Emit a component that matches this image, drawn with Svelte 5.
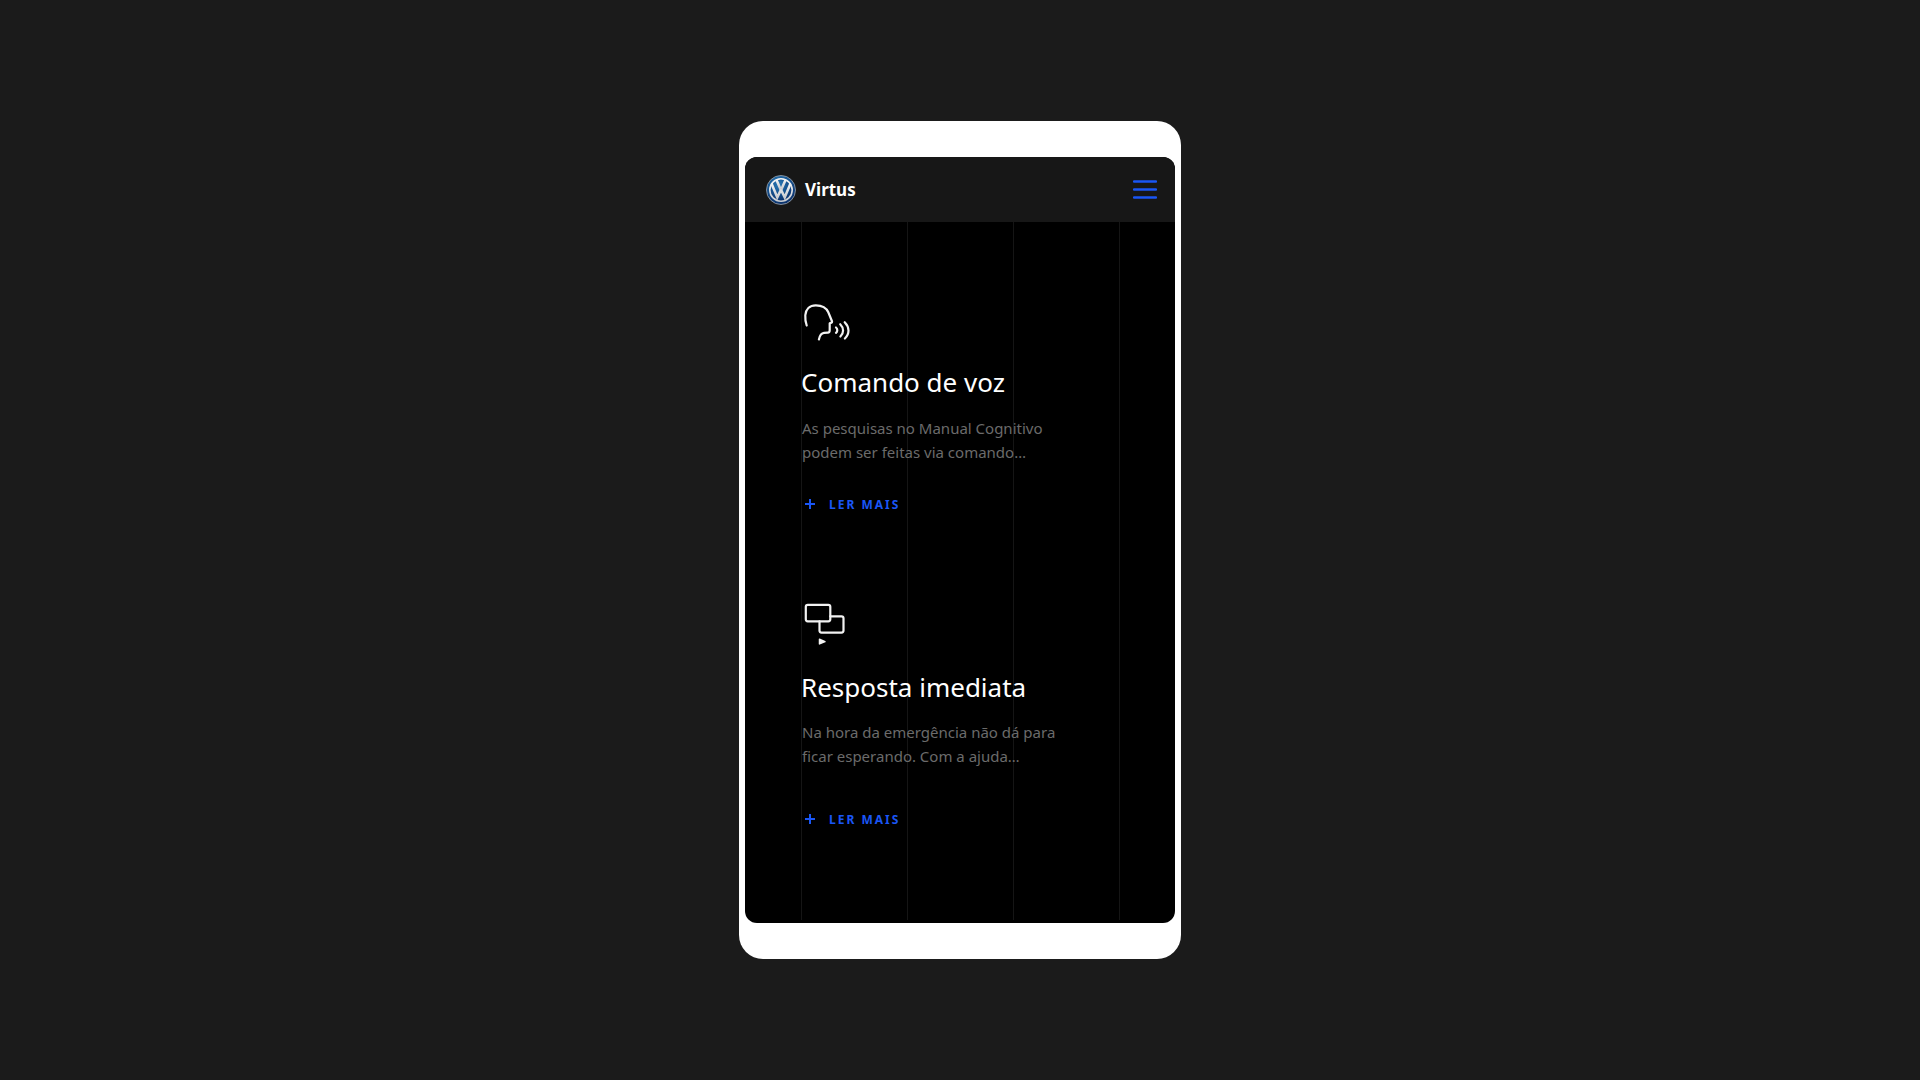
<script>
  const features = [
    {
      id: 'voice',
      title: 'Comando de voz',
      text: 'As pesquisas no Manual Cognitivo podem ser feitas via comando…',
    },
    {
      id: 'answer',
      title: 'Resposta imediata',
      text: 'Na hora da emergência não dá para ficar esperando. Com a ajuda…',
    },
  ];
</script>

<main class="stage">
  <div class="device">
    <div class="screen">
      <header class="bar">
        <a class="brand" href="#home">
          <svg class="logo" viewBox="0 0 30 30" aria-hidden="true">
            <defs>
              <radialGradient id="blue" cx="0.4" cy="0.25" r="0.8">
                <stop offset="0" stop-color="#2a78b4" />
                <stop offset="0.5" stop-color="#15528f" />
                <stop offset="1" stop-color="#0a2c66" />
              </radialGradient>
              <linearGradient id="chrome" x1="0" y1="0" x2="0" y2="1">
                <stop offset="0" stop-color="#f2f4f6" />
                <stop offset="1" stop-color="#c9ccd1" />
              </linearGradient>
              <clipPath id="disc"><circle cx="15" cy="15" r="11.8" /></clipPath>
            </defs>
            <circle cx="15" cy="15" r="14.5" fill="url(#blue)" stroke="#8f98a3" stroke-width="0.9" />
            <circle cx="15" cy="15" r="11.2" fill="url(#blue)" stroke="url(#chrome)" stroke-width="1.6" />
            <g clip-path="url(#disc)" fill="none" stroke="url(#chrome)" stroke-width="2.6" stroke-linejoin="miter">
              <path d="M10.2 4.2L14.3 13.7H15.7L19.8 4.2" />
              <path d="M5.4 8.2L11.3 22.4L14.5 15.7H15.5L18.7 22.4L24.6 8.2" />
            </g>
          </svg>
          <span>Virtus</span>
        </a>
        <button class="menu" type="button" aria-label="Menu">
          <svg viewBox="0 0 24 20" aria-hidden="true">
            <path d="M1 1.500H23M1 9.500H23M1 17.500H23" />
          </svg>
        </button>
      </header>

      <div class="content">
        {#each features as feature (feature.id)}
          <section class="feature {feature.id}">
            {#if feature.id === 'voice'}
              <svg class="icon" viewBox="0 0 48 44" aria-hidden="true">
                <path d="M5.700 25.500C4.500 22 4.100 18.500 4.300 15.200C4.700 9.300 8.600 5.300 14.800 5.300C21.300 5.300 25.300 7.600 27.300 12.300L30.900 21C31.300 22.100 31 22.600 30 22.800L28.700 23.300V30.200C28.700 31.700 28.200 32.500 26.800 32.600L23 32.800C20.100 33.100 18.700 35.800 17.900 39.400" />
                <path d="M35 27.500C36.700 28.900 36.700 31.400 35 32.800M39.200 24.200C43 28 43 33 39.400 36.500M43.700 22.200C48.700 27.300 48.700 34 43.900 38.500" />
              </svg>
            {:else}
              <svg class="icon" viewBox="0 0 48 48" aria-hidden="true">
                <rect x="4.800" y="4.800" width="24.500" height="16.500" rx="2" />
                <path d="M29.300 16.300H40.500Q42.500 16.300 42.500 18.300V30.600Q42.500 32.600 40.500 32.600H20.500Q18.500 32.600 18.500 30.600V21.300" />
                <path class="solid" d="M18.500 39.300L24 41.600L18.500 43.900Z" />
              </svg>
            {/if}
            <h2>{feature.title}</h2>
            <p>{feature.text}</p>
            <a class="more" href="#{feature.id}">
              <svg viewBox="0 0 12 12" aria-hidden="true"><path d="M1 5H11M6 0V10" /></svg>
              <span>LER MAIS</span>
            </a>
          </section>
        {/each}
      </div>
    </div>
  </div>
</main>

<style>
  :global(body) {
    margin: 0;
    background: #1b1b1b;
  }

  .stage {
    min-height: 100vh;
    display: grid;
    place-items: center;
    font-family: 'Noto Sans', 'Open Sans', sans-serif;
    color: #fff;
  }

  .device {
    box-sizing: border-box;
    width: 100%;
    max-width: 442px;
    padding: 36px 6px;
    border-radius: 24px;
    background: #fff;
  }

  .screen {
    overflow: hidden;
    border-radius: 12px;
    background: #000;
  }

  .bar {
    display: flex;
    align-items: center;
    justify-content: space-between;
    height: 65px;
    padding: 0 18px 0 21px;
    background: #171717;
  }

  .brand {
    display: flex;
    align-items: center;
    gap: 9px;
    color: inherit;
    font-size: 17px;
    line-height: 24px;
    font-weight: 700;
    text-decoration: none;
  }

  .logo {
    width: 30px;
    height: 30px;
  }

  .menu {
    display: flex;
    padding: 0;
    border: 0;
    background: none;
    cursor: pointer;
  }

  .menu svg {
    width: 24px;
    height: 20px;
    fill: none;
    stroke: #1a56f5;
    stroke-width: 2.4;
    stroke-linecap: round;
  }

  .content {
    display: flex;
    flex-direction: column;
    gap: 83px;
    margin: 0 55px 3px 56px;
    padding: 78px 0 88px;
    background:
      linear-gradient(#151515, #151515) 0 0 / 1px 100% no-repeat,
      linear-gradient(#151515, #151515) 33.3% 0 / 1px 100% no-repeat,
      linear-gradient(#151515, #151515) 66.7% 0 / 1px 100% no-repeat,
      linear-gradient(#151515, #151515) 100% 0 / 1px 100% no-repeat;
  }

  .feature {
    display: flex;
    flex-direction: column;
    align-items: flex-start;
  }

  .icon {
    width: 48px;
    height: 44px;
    overflow: visible;
    fill: none;
    stroke: #f2f2f2;
    stroke-width: 2.2;
    stroke-linecap: round;
    stroke-linejoin: round;
  }

  .answer .icon {
    height: 48px;
  }

  .icon .solid {
    fill: #f2f2f2;
    stroke-width: 1.5;
  }

  h2 {
    margin: 22px 0 0;
    font-size: 26px;
    line-height: 32px;
    font-weight: 400;
  }

  p {
    max-width: 272px;
    margin: 18px 0 0 1px;
    color: #6b6b6b;
    font-size: 15px;
    line-height: 24px;
  }

  .answer h2 {
    margin-top: 23px;
  }

  .answer p {
    margin-top: 17px;
  }

  .more {
    display: flex;
    align-items: center;
    gap: 13px;
    margin: 29px 0 0 3px;
    color: #1a56f5;
    font-size: 12px;
    line-height: 24px;
    font-weight: 700;
    letter-spacing: 2px;
    text-decoration: none;
  }

  .answer .more {
    margin-top: 40px;
  }

  .more svg {
    width: 12px;
    height: 12px;
    fill: none;
    stroke: currentColor;
    stroke-width: 2;
  }
</style>
